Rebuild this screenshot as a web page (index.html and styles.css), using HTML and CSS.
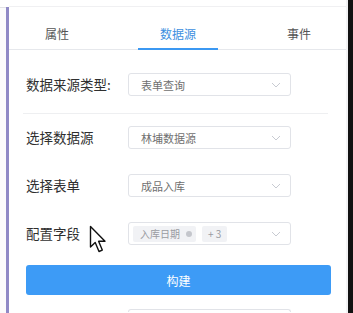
FILE: index.html
```html
<!DOCTYPE html>
<html lang="zh">
<head>
<meta charset="utf-8">
<link rel="stylesheet" href="styles.css">
</head>
<body>
<div class="app">
  <div class="side"></div>
  <div class="rail"></div>
  <div class="main">
    <div class="tabs">
      <div class="tab">属性</div>
      <div class="tab active">数据源</div>
      <div class="tab">事件</div>
    </div>
    <div class="form">
      <div class="row r1">
        <div class="label">数据来源类型:</div>
        <div class="select"><span class="val">表单查询</span><svg class="chev" width="10" height="6" viewBox="0 0 10 6"><path d="M1 1 L5 5 L9 1" fill="none" stroke="#c8cbd2" stroke-width="1"/></svg></div>
      </div>
      <div class="divider"></div>
      <div class="row r2">
        <div class="label">选择数据源</div>
        <div class="select"><span class="val">林埔数据源</span><svg class="chev" width="10" height="6" viewBox="0 0 10 6"><path d="M1 1 L5 5 L9 1" fill="none" stroke="#c8cbd2" stroke-width="1"/></svg></div>
      </div>
      <div class="row r3">
        <div class="label">选择表单</div>
        <div class="select"><span class="val">成品入库</span><svg class="chev" width="10" height="6" viewBox="0 0 10 6"><path d="M1 1 L5 5 L9 1" fill="none" stroke="#c8cbd2" stroke-width="1"/></svg></div>
      </div>
      <div class="row r4">
        <div class="label">配置字段</div>
        <div class="select tags">
          <span class="tag">入库日期<span class="close"></span></span>
          <span class="tag more">+ 3</span>
          <svg class="chev" width="10" height="6" viewBox="0 0 10 6"><path d="M1 1 L5 5 L9 1" fill="none" stroke="#c8cbd2" stroke-width="1"/></svg>
        </div>
      </div>
      <div class="btn">构建</div>
      <div class="row r5">
        <div class="label"></div>
        <div class="select stub"></div>
      </div>
    </div>
    <svg class="cursor" width="19" height="29" viewBox="0 0 19 29"><path d="M1.5 1.5 L1.5 22 L6.2 17.4 L10 26.5 L13.3 25.1 L9.6 16.3 L16 16.3 Z" fill="#fff" stroke="#111" stroke-width="1.4" stroke-linejoin="round"/></svg>
  </div>
  <div class="edge"></div>
  <div class="dark"></div>
</div>
</body>
</html>
```
FILE: styles.css
```css
html, body {
  margin: 0;
  padding: 0;
  background: #fff;
  overflow: hidden;
}
body {
  width: 353px;
  height: 313px;
  font-family: "Noto Sans CJK SC", "Noto Sans", sans-serif;
}
.app {
  display: flex;
  height: 313px;
  overflow: hidden;
}
.side {
  width: 6px;
  flex: none;
  margin-top: 7px;
  border-top: 1px solid #e2e2e6;
  background: #fbfbfc;
}
.rail {
  width: 3px;
  flex: none;
  margin-top: 7px;
  background: #8f89c6;
}
.main {
  flex: 1;
  position: relative;
  margin-top: 6px;
  border-top: 1px solid #f0f0f2;
  overflow: hidden;
}
.edge {
  width: 2px;
  flex: none;
  background: #f2f2f4;
}
.dark {
  width: 5px;
  flex: none;
  background: #111;
}
.tabs {
  display: flex;
  gap: 41px;
  padding-left: 8px;
  height: 42px;
  border-bottom: 1px solid #e6e8ec;
}
.tab {
  width: 80px;
  height: 43px;
  box-sizing: border-box;
  padding-top: 19px;
  text-align: center;
  font-size: 12px;
  line-height: 16px;
  color: #555;
  border-bottom: 2px solid transparent;
}
.tab.active {
  color: #3d8fe0;
  border-bottom-color: #3b98f2;
}
.form {
  display: flex;
  flex-direction: column;
}
.row {
  display: flex;
  align-items: center;
  padding-left: 17px;
  height: 23px;
}
.r1 { margin-top: 23px; }
.r2 { margin-top: 12px; }
.r3 { margin-top: 25px; }
.r4 { margin-top: 25px; }
.r5 { margin-top: 14px; height: 3px; align-items: flex-start; }
.divider {
  margin-top: 17px;
  margin-left: 14px;
  width: 305px;
  height: 1px;
  background: #eeeff1;
}
.label {
  width: 102px;
  flex: none;
  font-size: 13.5px;
  color: #2f2f2f;
  line-height: 20px;
  white-space: nowrap;
  margin-top: -2px;
}
.select {
  width: 163px;
  height: 23px;
  box-sizing: border-box;
  border: 1px solid #e1e3e8;
  border-radius: 3px;
  display: flex;
  align-items: center;
  padding: 0 9px 0 12px;
}
.val {
  flex: 1;
  font-size: 11px;
  color: #707070;
}
.chev {
  margin-left: auto;
  flex: none;
}
.select.tags {
  padding-left: 4px;
}
.tag {
  display: inline-flex;
  align-items: center;
  height: 16px;
  padding: 0 4px 0 7px;
  background: #f1f2f5;
  border-radius: 2px;
  font-size: 10px;
  color: #9a9ca2;
  white-space: nowrap;
}
.close {
  width: 6px;
  height: 6px;
  border-radius: 50%;
  background: #c4c6cc;
  margin-left: 6px;
}
.tag.more {
  margin-left: 6px;
  padding: 0 6px;
}
.btn {
  margin-top: 20px;
  margin-left: 17px;
  width: 305px;
  height: 30px;
  border-radius: 3px;
  background: #3d9bf6;
  color: #fff;
  font-size: 12px;
  display: flex;
  align-items: center;
  justify-content: center;
}
.select.stub {
  height: 3px;
  border-bottom: none;
  border-radius: 3px 3px 0 0;
}
.cursor {
  position: absolute;
  left: 80px;
  top: 218px;
}
```
